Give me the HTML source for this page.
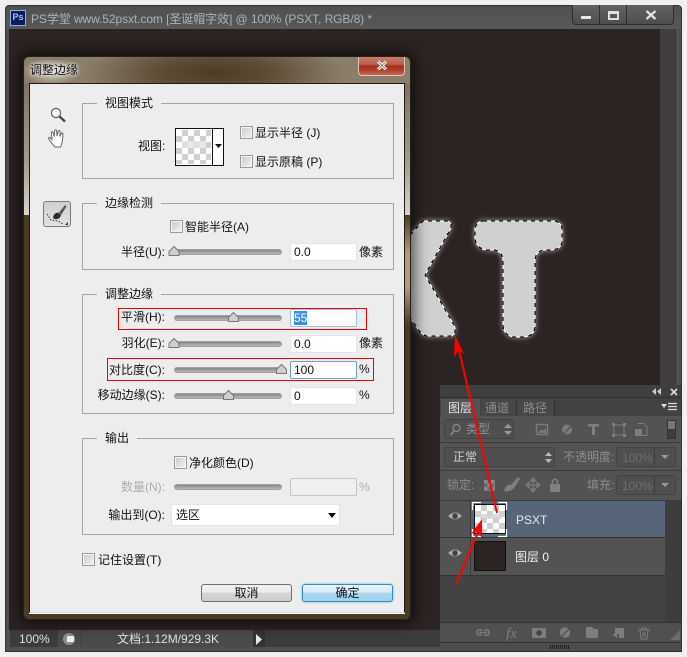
<!DOCTYPE html>
<html><head><meta charset="utf-8"><style>
html,body{margin:0;padding:0;background:#f0f0f0;}
#r{position:relative;width:687px;height:657px;overflow:hidden;background:#f0f0f0;font:12px/16px "Liberation Sans","WenQuanYi Zen Hei","Noto Sans CJK SC",sans-serif;color:#111;}
#r div,#r span.a{position:absolute;box-sizing:border-box;}
.t{white-space:nowrap;height:16px;}
.l{white-space:nowrap;height:16px;right:522px;text-align:right;}
.g{border:1px solid #a3a3a3;left:82px;width:312px;}
.lg{background:#ededed;padding:0 8px;left:97px;white-space:nowrap;height:16px;}
.cb{width:13px;height:13px;border:1px solid #9a9a9a;background:linear-gradient(135deg,#c8c8c8,#f4f4f4);box-shadow:inset 0 0 0 1px #f4f4f4;}
.tr{left:174px;width:108px;height:6px;border-radius:3px;background:linear-gradient(#868686,#b8b8b8);border:1px solid #a0a0a0;}
.in{left:290px;width:67px;background:#fff;border-radius:2px;padding-left:3px;line-height:17px;border:1px solid #e4e4e4;}
.hd{color:#8e8e8e;}
.rb{border:1px solid #ee0000;}
.ln{left:440px;width:242px;height:1px;background:#3a3a3a;}
.dd{background:#4f4f4f;border:1px solid #424242;border-radius:3px;}
</style></head><body><div id="r">

<!-- window -->
<div style="left:5px;top:5px;width:677px;height:647px;background:#4f4f4f;border:1px solid #333;border-radius:4px 4px 0 0;"></div>
<div style="left:6px;top:6px;width:675px;height:23px;background:linear-gradient(#505050,#585858);border-radius:3px 3px 0 0;"></div>
<div style="left:10px;top:10px;width:16px;height:16px;background:#0c1c62;border:1px solid #8fb2dd;color:#9cc7f2;font:bold 9px/13px 'Liberation Sans',sans-serif;text-align:center;">Ps</div>
<div class="t" style="left:31px;top:11px;color:#a9b2ba;font-size:12px;letter-spacing:-.08px;">PS学堂 www.52psxt.com [圣诞帽字效] @ 100% (PSXT, RGB/8) *</div>

<div style="left:572px;top:5px;width:102px;height:20px;background:linear-gradient(#626262,#4e4e4e);border:1px solid #2e2e2e;border-top:none;border-radius:0 0 4px 4px;"></div>
<div style="left:599px;top:5px;width:1px;height:19px;background:#2e2e2e"></div>
<div style="left:626px;top:5px;width:1px;height:19px;background:#2e2e2e"></div>
<div style="left:581px;top:16px;width:10px;height:3px;background:#e4e4e4"></div>
<div style="left:608px;top:11px;width:11px;height:9px;border:2px solid #e0e0e0;border-top-width:3px;"></div>
<svg style="position:absolute;left:645px;top:10px" width="12" height="10"><path d="M1.500 1L10.500 9M10.500 1L1.500 9" stroke="#e4e4e4" stroke-width="2.200"/></svg>

<!-- canvas -->
<div style="left:9px;top:29px;width:651px;height:601px;background:#2c2422;"></div>
<div style="left:660px;top:29px;width:17px;height:601px;background:#3f3f3f;"></div>
<div style="left:677px;top:29px;width:1px;height:618px;background:#5e5e5e;"></div>

<svg style="position:absolute;left:0;top:0" width="687" height="657">
<defs><filter id="gl" x="-20%" y="-20%" width="140%" height="140%"><feGaussianBlur stdDeviation="3"/></filter></defs>
<path d="M405 241L423 221H447Q452 222 451 228L425 275L454 325Q457 333 452 336H427Q422 335 418 329L405 310Z" fill="#fff" fill-opacity=".7" filter="url(#gl)"/>
<path d="M483 221H554Q562 222 562 230V241Q562 249 552 250H544Q536 251 535 260V325Q535 336 524 337H514Q504 336 503 325V260Q502 251 494 250H486Q476 248 475 238V229Q476 222 483 221Z" fill="#fff" fill-opacity=".7" filter="url(#gl)"/>
<path d="M405 241L423 221H447Q452 222 451 228L425 275L454 325Q457 333 452 336H427Q422 335 418 329L405 310Z" fill="#d0d0d0"/>
<path d="M483 221H554Q562 222 562 230V241Q562 249 552 250H544Q536 251 535 260V325Q535 336 524 337H514Q504 336 503 325V260Q502 251 494 250H486Q476 248 475 238V229Q476 222 483 221Z" fill="#d0d0d0"/>
<g fill="none" stroke-width="1" shape-rendering="crispEdges">
<path d="M405 241L423 221H447Q452 222 451 228L425 275L454 325Q457 333 452 336H427Q422 335 418 329L405 310Z" stroke="#fff"/>
<path d="M405 241L423 221H447Q452 222 451 228L425 275L454 325Q457 333 452 336H427Q422 335 418 329L405 310Z" stroke="#000" stroke-dasharray="4 4"/>
<path d="M483 221H554Q562 222 562 230V241Q562 249 552 250H544Q536 251 535 260V325Q535 336 524 337H514Q504 336 503 325V260Q502 251 494 250H486Q476 248 475 238V229Q476 222 483 221Z" stroke="#fff"/>
<path d="M483 221H554Q562 222 562 230V241Q562 249 552 250H544Q536 251 535 260V325Q535 336 524 337H514Q504 336 503 325V260Q502 251 494 250H486Q476 248 475 238V229Q476 222 483 221Z" stroke="#000" stroke-dasharray="4 4"/>
</g>
</svg>

<!-- status bar -->
<div style="left:10px;top:630px;width:667px;height:17px;background:#3c3c3c;"></div>
<div style="left:58px;top:630px;width:23px;height:17px;background:#4a4a4a;"></div>
<div style="left:82px;top:630px;width:171px;height:17px;background:#4a4a4a;"></div>
<div style="left:253px;top:630px;width:12px;height:17px;background:#333;"></div>
<div class="t" style="left:19px;top:631px;color:#e0e0e0;">100%</div>
<div style="left:63px;top:633px;width:12px;height:12px;border-radius:6px;background:#8f8f8f;"></div>
<div style="left:67px;top:636px;width:7px;height:6px;background:#eee;"></div>
<div class="t" style="left:117px;top:631px;color:#e0e0e0;">文档:1.12M/929.3K</div>
<svg style="position:absolute;left:255px;top:634px" width="8" height="11"><path d="M1 0L7 5.500L1 11Z" fill="#e8e8e8"/></svg>

<!-- dialog -->
<div style="left:23px;top:56px;width:388px;height:564px;border-radius:6px;box-shadow:0 0 14px 4px rgba(0,0,0,.6);border:1px solid #222;background:#4b3a24;"></div>
<div style="left:24px;top:57px;width:386px;height:26px;border-radius:5px 5px 0 0;background:radial-gradient(ellipse 130px 36px at 190px 16px,#4e3b22 0,#5f4e38 45%,#8a7d6a 100%);"></div>
<div style="left:24px;top:60px;width:60px;height:23px;background:radial-gradient(ellipse 30px 14px at 28px 11px,rgba(225,220,210,.95),rgba(200,190,175,0));"></div>
<div style="left:24px;top:83px;width:5px;height:132px;background:linear-gradient(#7f7260,#a79c8a 60%,#d8d3cc);"></div>
<div style="left:405px;top:83px;width:5px;height:132px;background:linear-gradient(#7f7260,#a79c8a 60%,#d8d3cc);"></div>
<div style="left:24px;top:215px;width:5px;height:396px;background:#4c3a22;"></div>
<div style="left:405px;top:215px;width:5px;height:110px;background:linear-gradient(#4c3a22,#b39c78 35%,#b39c78 65%,#4c3a22);"></div>
<div style="left:405px;top:325px;width:5px;height:286px;background:#4c3a22;"></div>
<div style="left:24px;top:612px;width:386px;height:7px;background:#4c3a22;border-radius:0 0 5px 5px;"></div>
<div style="left:358px;top:57px;width:47px;height:19px;border:1px solid #d8c9c0;border-top:none;border-radius:0 0 4px 4px;background:linear-gradient(#c97a6a 0,#b9604e 40%,#a7311c 50%,#b03a22 70%,#c06a58);"></div>
<svg style="position:absolute;left:376px;top:60px" width="12" height="11"><path d="M2 1.500L10 9.500M10 1.500L2 9.500" stroke="#fff" stroke-width="3"/><path d="M2 1.500L10 9.500M10 1.500L2 9.500" stroke="#5a5a5a" stroke-width=".7"/></svg>
<div class="t" style="left:30px;top:62px;color:#111;text-shadow:0 0 3px #eee,0 0 3px #eee;">调整边缘</div>
<div style="left:29px;top:83px;width:376px;height:530px;background:#ededed;border:1px solid #1e1a16;border-bottom:1px solid #d8d8d8;box-shadow:0 1px 0 #fff;"></div>

<!-- tool icons -->
<svg style="position:absolute;left:46px;top:103px" width="24" height="48" fill="none">
<circle cx="10" cy="10" r="4.600" stroke="#6a6a6a" stroke-width="1.300" fill="#f6f6f6"/>
<path d="M13.500 13.500L19 18.500" stroke="#444" stroke-width="2.400"/>
<path d="M5 39L2.500 35.500Q2.500 34 4 34.500L6 36.500L5.300 29.500Q6 28 7.200 29.500L8.300 33.500L8.600 27.500Q9.600 26 10.600 27.500L11 33L12.300 28Q13.400 27 14.200 28.300L13.800 33.500L15.600 30Q16.800 29.600 17 31L16.400 38Q15.400 42 14.600 44H9Q7 42 5 39Z" stroke="#666" stroke-width="1" fill="#fbfbfb"/>
</svg>
<div style="left:43px;top:201px;width:28px;height:26px;border:1px solid #7a7a7a;border-radius:3px;background:linear-gradient(#cfcfcf,#e2e2e2);"></div>
<svg style="position:absolute;left:44px;top:202px" width="26" height="24" fill="none">
<path d="M3 12L7 18L14 19L19 22" stroke="#333" stroke-width="1" stroke-dasharray="1.500 1.500"/>
<path d="M9 15Q10 11 14 10.500L17 13Q16 18 10 17Z" fill="#2a2a2a"/>
<path d="M15 10.500L21 3L22.500 4.500L17 13" fill="#555"/>
<path d="M24 20V23H21Z" fill="#333"/>
</svg>

<!-- 视图模式 -->
<div class="g" style="top:103px;height:76px;"></div>
<div class="lg" style="top:95px;">视图模式</div>
<div class="t" style="left:138px;top:138px;">视图:</div>
<div style="left:175px;top:128px;width:49px;height:38px;border:1px solid #111;background:#fff;"></div>
<div style="left:212px;top:128px;width:1px;height:38px;background:#111;"></div>
<div style="left:176px;top:130px;width:35px;height:34px;background:repeating-conic-gradient(#cfcfcf 0 25%,#fff 0 50%) 0 0/12px 12px;"></div>
<div style="left:182px;top:141px;width:24px;height:7px;background:#e4e4e4;opacity:.8;"></div>
<svg style="position:absolute;left:215px;top:144px" width="7" height="5"><path d="M0 0H7L3.500 4Z" fill="#111"/></svg>
<div class="cb" style="left:240px;top:126px;"></div>
<div class="t" style="left:255px;top:125px;">显示半径 (J)</div>
<div class="cb" style="left:240px;top:155px;"></div>
<div class="t" style="left:255px;top:154px;">显示原稿 (P)</div>

<!-- 边缘检测 -->
<div class="g" style="top:203px;height:67px;"></div>
<div class="lg" style="top:195px;">边缘检测</div>
<div class="cb" style="left:170px;top:220px;"></div>
<div class="t" style="left:185px;top:219px;">智能半径(A)</div>
<div class="l" style="top:244px;">半径(U):</div>
<div class="tr" style="top:249px;"></div>
<div class="in" style="top:243px;height:18px;">0.0</div>
<div class="t" style="left:359px;top:244px;">像素</div>

<!-- 调整边缘 -->
<div class="g" style="top:294px;height:120px;"></div>
<div class="lg" style="top:286px;">调整边缘</div>
<div class="l" style="top:309px;">平滑(H):</div>
<div class="tr" style="top:315px;"></div>
<div class="in" style="top:309px;height:18px;border-color:#9cc3e8;"><span style="background:#3a8fe8;color:#fff;">55</span></div>
<div class="l" style="top:335px;">羽化(E):</div>
<div class="tr" style="top:341px;"></div>
<div class="in" style="top:335px;height:18px;">0.0</div>
<div class="t" style="left:359px;top:335px;">像素</div>
<div class="l" style="top:362px;">对比度(C):</div>
<div class="tr" style="top:367px;"></div>
<div class="in" style="top:361px;height:18px;border-color:#6f9fc8;">100</div>
<div class="t" style="left:359px;top:361px;">%</div>
<div class="l" style="top:387px;">移动边缘(S):</div>
<div class="tr" style="top:393px;"></div>
<div class="in" style="top:387px;height:18px;">0</div>
<div class="t" style="left:359px;top:387px;">%</div>
<div class="rb" style="left:118px;top:308px;width:249px;height:22px;"></div>
<div class="rb" style="left:107px;top:358px;width:267px;height:23px;"></div>

<svg style="position:absolute;left:0;top:0" width="687" height="657">
<g fill="#cfcfcf" stroke="#777" stroke-width="1">
<path d="M169 255.500V251.500L174 246.500L179 251.500V255.500Z"/>
<path d="M228.500 321.500V317.500L233.500 312.500L238.500 317.500V321.500Z"/>
<path d="M169 347.500V343.500L174 338.500L179 343.500V347.500Z"/>
<path d="M276.500 373.500V369.500L281.500 364.500L286.500 369.500V373.500Z"/>
<path d="M223.500 399.500V395.500L228.500 390.500L233.500 395.500V399.500Z"/>
</g></svg>

<!-- 输出 -->
<div class="g" style="top:438px;height:97px;"></div>
<div class="lg" style="top:430px;">输出</div>
<div class="cb" style="left:174px;top:456px;"></div>
<div class="t" style="left:189px;top:455px;">净化颜色(D)</div>
<div class="l" style="top:479px;color:#adadad;">数量(N):</div>
<div class="tr" style="top:484px;"></div>
<div style="left:290px;top:478px;width:67px;height:18px;background:#efefef;border:1px solid #c4c4c4;border-radius:2px;"></div>
<div class="t" style="left:359px;top:479px;color:#adadad;">%</div>
<div class="l" style="top:507px;">输出到(O):</div>
<div style="left:171px;top:504px;width:169px;height:22px;background:#fff;border:1px solid #e4e4e4;border-radius:2px;"></div>
<div class="t" style="left:176px;top:507px;">选区</div>
<svg style="position:absolute;left:328px;top:513px" width="8" height="5"><path d="M0 0H8L4 5Z" fill="#111"/></svg>

<div class="cb" style="left:82px;top:553px;"></div>
<div class="t" style="left:98px;top:552px;">记住设置(T)</div>

<div style="left:201px;top:584px;width:91px;height:18px;border:1px solid #707070;border-radius:3px;background:linear-gradient(#f2f2f2,#ebebeb 45%,#d4d4d4 50%,#cfcfcf);text-align:center;line-height:17px;">取消</div>
<div style="left:302px;top:584px;width:91px;height:18px;border:1px solid #2f8fc0;border-radius:3px;background:linear-gradient(#e6f4fb,#d6ecf7 45%,#acd6ec 50%,#a4d0e8);box-shadow:0 0 2px #56b8e8;text-align:center;line-height:17px;">确定</div>

<!-- layers panel -->
<div style="left:440px;top:385px;width:242px;height:267px;background:#434343;"></div>
<div style="left:440px;top:385px;width:242px;height:13px;background:#3f3f3f;"></div>
<svg style="position:absolute;left:650px;top:388px" width="30" height="8"><path d="M6 0V7L2 3.500ZM11 0V7L7 3.500Z" fill="#ccc"/><path d="M21 1L27 7M27 1L21 7" stroke="#ddd" stroke-width="1.600"/></svg>
<div style="left:440px;top:397px;width:242px;height:1px;background:#2f2f2f;"></div>
<div style="left:440px;top:398px;width:242px;height:18px;background:#424242;"></div>
<div style="left:441px;top:399px;width:39px;height:17px;background:#535353;"></div>
<div style="left:481px;top:399px;width:36px;height:17px;background:#474747;border-right:1px solid #333;"></div>
<div style="left:517px;top:399px;width:38px;height:17px;background:#474747;border-right:1px solid #333;"></div>
<div class="t" style="left:448px;top:400px;color:#e2e2e2;">图层</div>
<div class="t" style="left:485px;top:400px;"><span class="hd">通道</span></div>
<div class="t" style="left:523px;top:400px;"><span class="hd">路径</span></div>
<svg style="position:absolute;left:661px;top:402px" width="16" height="9"><path d="M0 2H6L3 6Z" fill="#ddd"/><path d="M7 1.500H16M7 4.500H16M7 7.500H16" stroke="#ddd" stroke-width="1.300"/></svg>

<div style="left:440px;top:416px;width:242px;height:85px;background:#535353;"></div>
<div class="ln" style="top:442px;"></div>
<div class="ln" style="top:470px;"></div>
<div class="ln" style="top:500px;"></div>

<div class="dd" style="left:444px;top:419px;width:70px;height:20px;"></div>
<svg style="position:absolute;left:449px;top:423px" width="13" height="13" fill="none"><circle cx="7.500" cy="5" r="3.500" stroke="#8a8a8a" stroke-width="1.300"/><path d="M5 8L1.500 12" stroke="#8a8a8a" stroke-width="1.600"/></svg>
<div class="t" style="left:466px;top:421px;"><span class="hd">类型</span></div>
<svg style="position:absolute;left:504px;top:424px" width="8" height="11"><path d="M0 4L4 0L8 4ZM0 7L4 11L8 7Z" fill="#999"/></svg>
<svg style="position:absolute;left:535px;top:421px" width="130" height="18" fill="none">
<rect x="1.500" y="3.500" width="11" height="10" stroke="#7d7d7d" stroke-width="1.400"/><path d="M3 12L6 8L8 10L11 7V12Z" fill="#7d7d7d"/>
<circle cx="32" cy="8.500" r="5" fill="#7d7d7d"/><path d="M36 5L29 12.500" stroke="#535353" stroke-width="1.300"/>
<path d="M53 3H64V5.500H60V14H57V5.500H53Z" fill="#7d7d7d"/>
<rect x="79" y="4" width="10" height="10" stroke="#7d7d7d"/><path d="M77 2h3v3h-3zM88 2h3v3h-3zM77 13h3v3h-3zM88 13h3v3h-3z" fill="#7d7d7d"/>
<path d="M103 2.500H109L112 6V14.500H104" stroke="#7d7d7d"/><rect x="100" y="8" width="7" height="7" fill="#7d7d7d"/>
</svg>
<div style="left:667px;top:420px;width:9px;height:19px;background:#3d3d3d;border:1px solid #333;"></div>
<div style="left:668px;top:421px;width:7px;height:8px;background:#777;"></div>

<div class="dd" style="left:444px;top:447px;width:111px;height:20px;"></div>
<div class="t" style="left:453px;top:449px;color:#cfcfcf;">正常</div>
<svg style="position:absolute;left:545px;top:452px" width="7" height="11"><path d="M0 4L3.500 0L7 4ZM0 7L3.500 11L7 7Z" fill="#bbb"/></svg>
<div class="t" style="left:563px;top:449px;"><span class="hd">不透明度:</span></div>
<div class="dd" style="left:616px;top:447px;width:60px;height:20px;"></div>
<div style="left:654px;top:448px;width:1px;height:18px;background:#3d3d3d;"></div>
<div class="t" style="left:622px;top:450px;color:#6f6f6f;">100%</div>
<svg style="position:absolute;left:661px;top:455px" width="8" height="4"><path d="M0 0H8L4 4Z" fill="#999"/></svg>

<div class="t" style="left:447px;top:477px;"><span class="hd">锁定:</span></div>
<div style="left:484px;top:480px;width:11px;height:11px;background:repeating-conic-gradient(#6a6a6a 0 25%,#888 0 50%) 0 0/7px 7px;"></div>
<svg style="position:absolute;left:503px;top:476px" width="62" height="18" fill="none">
<path d="M1 15Q3 8 8 9L15 1L17 3L11 12Q8 16 1 15Z" fill="#808080"/>
<path d="M30 3V15M24 9H36M30 2L27.500 5H32.500ZM30 16L27.500 13H32.500ZM23 9L26 6.500V11.500ZM37 9L34 6.500V11.500Z" stroke="#808080" stroke-width="1"/>
<rect x="47" y="8" width="10" height="8" fill="#808080"/><path d="M49.500 8V5Q52 1.500 54.500 5V8" stroke="#808080" stroke-width="1.500"/>
</svg>
<div class="t" style="left:587px;top:477px;"><span class="hd">填充:</span></div>
<div class="dd" style="left:616px;top:475px;width:60px;height:20px;"></div>
<div style="left:654px;top:476px;width:1px;height:18px;background:#3d3d3d;"></div>
<div class="t" style="left:622px;top:478px;color:#6f6f6f;">100%</div>
<svg style="position:absolute;left:661px;top:483px" width="8" height="4"><path d="M0 0H8L4 4Z" fill="#999"/></svg>

<!-- layers -->
<div style="left:665px;top:501px;width:17px;height:121px;background:#3d3d3d;"></div>
<div style="left:440px;top:501px;width:225px;height:36px;background:#576578;"></div>
<div style="left:440px;top:501px;width:31px;height:36px;background:#535353;"></div>
<div style="left:440px;top:537px;width:225px;height:38px;background:#535353;"></div>
<div style="left:440px;top:537px;width:225px;height:1px;background:#333;"></div>
<div style="left:440px;top:575px;width:225px;height:1px;background:#333;"></div>
<div style="left:470px;top:501px;width:1px;height:75px;background:#3a3a3a;"></div>
<div style="left:474px;top:504px;width:32px;height:30px;border:1px solid #111;background:repeating-conic-gradient(#cfcfcf 0 25%,#fff 0 50%) 0 0/12px 12px;"></div>
<div style="left:480px;top:514px;width:22px;height:5px;background:#d4d4d4;opacity:.8;"></div>
<svg style="position:absolute;left:471px;top:501px" width="40" height="37" fill="none"><path d="M1.500 9V1.500H10M27 1.500H35.500V9M1.500 28V35.500H10M27 35.500H35.500V28" stroke="#fff" stroke-width="1.300"/></svg>
<div style="left:474px;top:541px;width:32px;height:30px;background:#2c2422;border:1px solid #111;"></div>
<svg style="position:absolute;left:448px;top:510px" width="18" height="65" fill="none">
<path d="M0.500 6Q7 -0.500 13.500 6Q7 12 0.500 6Z" fill="#c0c0c0" stroke="#888"/><circle cx="7" cy="6" r="2.800" fill="#444"/>
<path d="M0.500 43Q7 36.500 13.500 43Q7 49 0.500 43Z" fill="#c0c0c0" stroke="#888"/><circle cx="7" cy="43" r="2.800" fill="#444"/>
</svg>
<div class="t" style="left:516px;top:512px;color:#e8e8e8;">PSXT</div>
<div class="t" style="left:515px;top:549px;color:#f0f0f0;">图层 0</div>

<!-- footer -->
<div style="left:440px;top:622px;width:242px;height:1px;background:#333;"></div>
<div style="left:440px;top:623px;width:242px;height:19px;background:#505050;"></div>
<div style="left:440px;top:642px;width:242px;height:1px;background:#333;"></div>
<div style="left:440px;top:643px;width:242px;height:8px;background:#4c4c4c;"></div>
<div style="left:440px;top:651px;width:242px;height:1px;background:#2f2f2f;"></div>
<div style="left:681px;top:385px;width:1px;height:267px;background:#333;"></div>
<div style="left:550px;top:645px;width:20px;height:4px;background:repeating-linear-gradient(90deg,#222 0 1px,transparent 1px 2px);"></div>
<svg style="position:absolute;left:475px;top:625px" width="206" height="18" fill="none">
<path d="M7 5H3Q0.500 7.500 3 10H7M9 5H13Q15.500 7.500 13 10H9M4 7.500H12" stroke="#7d7d7d" stroke-width="1.500"/>
<text x="31" y="13" font-family="Liberation Serif" font-style="italic" font-size="15" fill="#7d7d7d">fx</text>
<rect x="57" y="3" width="14" height="10" fill="#7d7d7d"/><circle cx="64" cy="8" r="2.800" fill="#444"/>
<circle cx="90" cy="7.500" r="5.200" fill="#7d7d7d"/><path d="M94 4L87 11" stroke="#505050" stroke-width="1.300"/>
<path d="M111 2H117L119 4H123V13H111Z" fill="#7d7d7d"/>
<path d="M140 3H149V13H144V9H140Z" fill="#7d7d7d"/><path d="M137 9H142V13Z" fill="#7d7d7d"/>
<path d="M163 5H175M165 5L166 14H172L173 5M167 5V3H171V5M168 7V12M170 7V12" stroke="#7d7d7d" stroke-width="1"/>
</svg>
<div style="left:670px;top:630px;width:10px;height:10px;background:radial-gradient(#888 0 .6px,transparent 1px) 0 0/2px 2px;clip-path:polygon(100% 0,100% 100%,0 100%);"></div>

<!-- arrows -->
<svg style="position:absolute;left:0;top:0" width="687" height="657">
<path d="M497 513L459 350" stroke="#f00" stroke-width="2" fill="none"/>
<path d="M455 335L464 354L459 350L454 357Z" fill="#f00"/>
<path d="M456 584L479 530" stroke="#f00" stroke-width="2" fill="none"/>
<path d="M482 519L482 538L478 532L471 534Z" fill="#f00"/>
</svg>

</div></body></html>
